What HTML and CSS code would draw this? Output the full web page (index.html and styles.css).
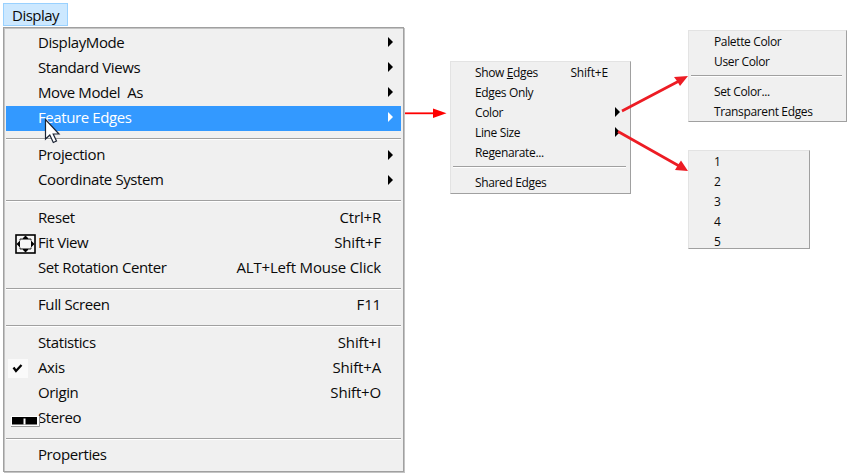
FILE: index.html
```html
<!DOCTYPE html>
<html lang="en">
<head>
<meta charset="utf-8">
<title>Display menu</title>
<link rel="stylesheet" href="styles.css">
</head>
<body>
<button class="menu-button"><span>Display</span></button>

<nav class="menu main-menu">
  <div class="item sub"><span>DisplayMode</span></div>
  <div class="item sub"><span>Standard Views</span></div>
  <div class="item sub"><span>Move Model&nbsp; As</span></div>
  <div class="item sub active"><span>Feature Edges</span></div>
  <hr>
  <div class="item sub"><span>Projection</span></div>
  <div class="item sub"><span>Coordinate System</span></div>
  <hr>
  <div class="item"><span>Reset</span><kbd>Ctrl+R</kbd></div>
  <div class="item">
    <svg class="icon fit-icon" width="21" height="20" viewBox="0 0 21 20"><rect x="1" y="1" width="19" height="18" fill="#f7f7f7" stroke="#000" stroke-width="1.6"/><path d="M10.500 1.500 14.500 5.500H6.500ZM10.500 18.500 14.500 14.500H6.500ZM1.500 10 5 6.500V13.500ZM19.500 10 16 6.500V13.500Z"/><path d="M5 6.500V5H7M14 5H16V6.500M5 13.500V15H7M14 15H16V13.500" fill="none" stroke="#222"/></svg>
    <span>Fit View</span><kbd>Shift+F</kbd>
  </div>
  <div class="item"><span>Set Rotation Center</span><kbd>ALT+Left Mouse Click</kbd></div>
  <hr>
  <div class="item"><span>Full Screen</span><kbd>F11</kbd></div>
  <hr>
  <div class="item"><span>Statistics</span><kbd>Shift+I</kbd></div>
  <div class="item">
    <svg class="icon check-icon" width="20" height="19" viewBox="0 0 20 19"><path fill="#fafafa" d="M0 0h20v19H0z"/><path d="M5.500 8.500 8 12 13.500 6" fill="none" stroke="#000" stroke-width="2.300"/></svg>
    <span>Axis</span><kbd>Shift+A</kbd>
  </div>
  <div class="item"><span>Origin</span><kbd>Shift+O</kbd></div>
  <div class="item">
    <svg class="icon stereo-icon" width="29" height="11" viewBox="0 0 29 11"><path fill="#fff" d="M0 0h28v10H0z"/><path d="M0 10.500H28.500V0" fill="none" stroke="#999"/><path d="M1 1h25v7.500H1z"/><path fill="#fff" d="M12.500 2.500h2v6h-2z"/></svg>
    <span>Stereo</span>
  </div>
  <hr>
  <div class="item"><span>Properties</span></div>
</nav>

<nav class="menu small edges-menu">
  <div class="item"><span>Show <u>E</u>dges</span><kbd>Shift+E</kbd></div>
  <div class="item"><span>Edges Only</span></div>
  <div class="item sub"><span>Color</span></div>
  <div class="item sub"><span>Line Size</span></div>
  <div class="item"><span>Regenarate...</span></div>
  <hr>
  <div class="item"><span>Shared Edges</span></div>
</nav>

<nav class="menu small color-menu">
  <div class="item"><span>Palette Color</span></div>
  <div class="item"><span>User Color</span></div>
  <hr>
  <div class="item"><span>Set Color...</span></div>
  <div class="item"><span>Transparent Edges</span></div>
</nav>

<nav class="menu small size-menu">
  <div class="item"><span>1</span></div>
  <div class="item"><span>2</span></div>
  <div class="item"><span>3</span></div>
  <div class="item"><span>4</span></div>
  <div class="item"><span>5</span></div>
</nav>

<svg class="overlay" width="852" height="476" viewBox="0 0 852 476">
  <path d="M405 113.300H434" stroke="#fe0000" stroke-width="1.800"/>
  <path d="M433 108.500 446.500 113.300 433 118Z" fill="#fe0000"/>
  <g stroke="#ed1c24" stroke-width="2.700" fill="#ed1c24">
    <path d="M622 111 680 80.500M618 131.500 680 166.500"/>
    <path stroke="none" d="M688 76 674 77 677 81 680 86ZM688 171 681 160.500 678 165 675 170Z"/>
  </g>
  <path d="M45.500 119.500V139L49.800 135 53.300 142.500 56.500 141 53.200 134H59Z" fill="#fff" stroke="#1c2434" stroke-width="1.200"/>
</svg>
</body>
</html>
```
FILE: styles.css
```css
body {
  margin: 0;
  height: 476px;
  position: relative;
  overflow: hidden;
  background: #fff;
  color: #0a0a0a;
  font: 15px/22px "Open Sans", "Noto Sans", sans-serif;
  letter-spacing: -0.4px;
}
.menu-button {
  display: block;
  box-sizing: border-box;
  margin: 3px 0 0 3px;
  width: 65px;
  height: 23px;
  padding: 0 0 0 8px;
  border: 1px solid #99d1ff;
  background: #cce8ff;
  color: inherit;
  font: inherit;
  letter-spacing: -0.5px;
  line-height: 20px;
  text-align: left;
}
.menu {
  position: absolute;
  box-sizing: border-box;
  background: #f0f0f0;
}
.main-menu {
  left: 3px;
  top: 27px;
  width: 401px;
  height: 445px;
  padding: 2.500px 2px 0;
  border: 1px solid #a0a0a0;
  box-shadow: inset 1px 1px #c4c4c4, 1px 1px #c4c4c4;
}
.item {
  position: relative;
  display: flex;
  justify-content: space-between;
  height: 25px;
  padding: 0 20px 0 32px;
  white-space: nowrap;
}
kbd {
  font: inherit;
  letter-spacing: -0.170px;
}
.sub::after {
  content: "";
  align-self: center;
  margin-right: -11px;
  border: 5px solid transparent;
  border-left: 5px solid #000;
  border-right: 0;
}
.main-menu .sub { padding-right: 19px; }
.main-menu .sub::after { margin-top: -2px; }
.active {
  background: #3399ff;
  color: #fff;
}
.main-menu .active::after { border-left-color: #fff; }
hr {
  margin: 0;
  height: 12.500px;
  border: 0;
  background: linear-gradient(#a0a0a0 0 1px, #fff 1px) 0 7px / 100% 2px no-repeat;
}
.small {
  border: 1px solid #e3e3e3;
  border-right-color: #a0a0a0;
  border-bottom-color: #a0a0a0;
  font-size: 12px;
  line-height: 22px;
  letter-spacing: -0.360px;
}
.small .item {
  height: 20px;
  padding: 0 22px 0 24px;
}
.small .sub { padding-right: 21px; }
.small hr {
  height: 10px;
  margin: 0 4px 0 2px;
  background-position: 0 4px;
}
.edges-menu { left: 450px; top: 61px; width: 181px; height: 133px; }
.color-menu { left: 688px; top: 30px; width: 159px; height: 92px; }
.size-menu { left: 688px; top: 150px; width: 122px; height: 99px; }
.color-menu .item,
.size-menu .item { padding-left: 25px; }
.icon { position: absolute; }
.fit-icon { left: 9px; top: 3px; }
.check-icon { left: 2px; top: 3px; }
.stereo-icon { left: 5px; top: 10px; }
.overlay {
  position: absolute;
  left: 0;
  top: 0;
}
```
